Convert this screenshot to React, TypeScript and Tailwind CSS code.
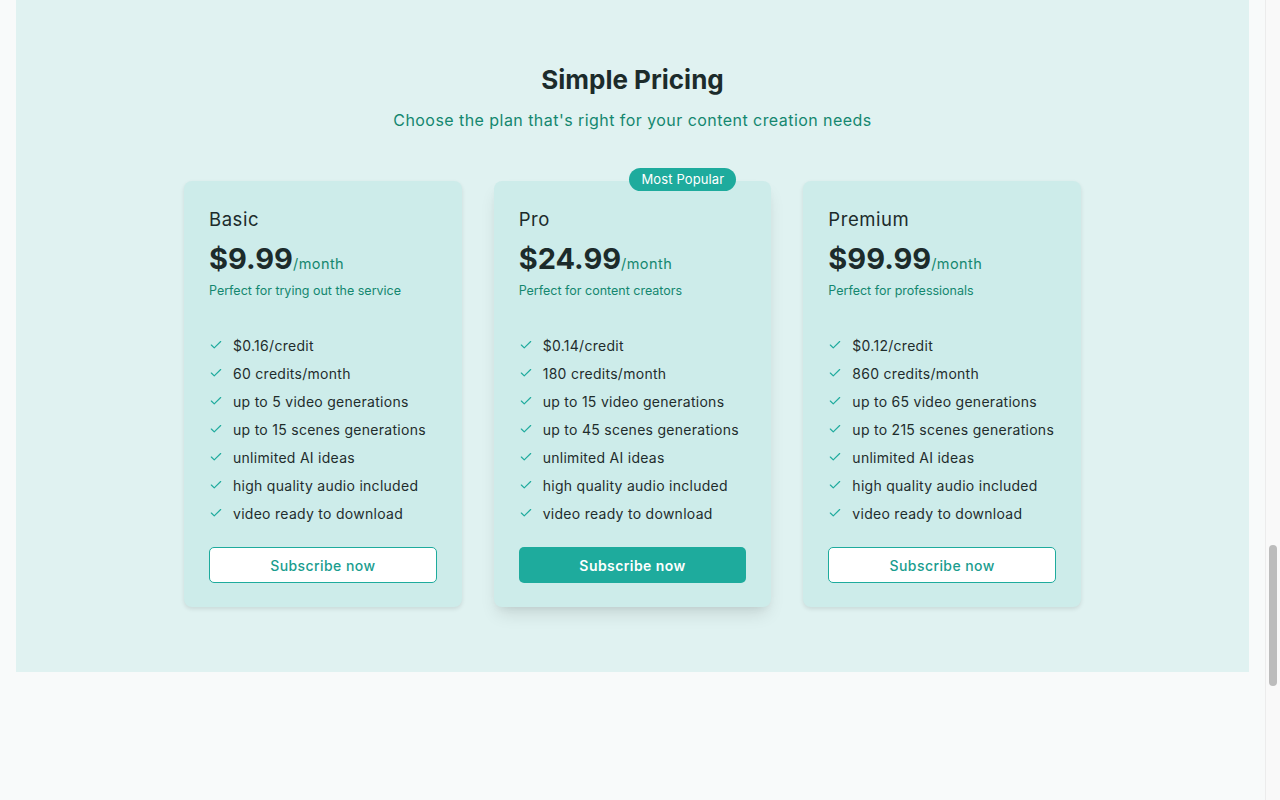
import { Check } from "lucide-react";

const plans = [
    {
        name: "Basic",
        price: "$9.99",
        blurb: "Perfect for trying out the service",
        features: [
            "$0.16/credit",
            "60 credits/month",
            "up to 5 video generations",
            "up to 15 scenes generations",
            "unlimited AI ideas",
            "high quality audio included",
            "video ready to download",
        ],
    },
    {
        name: "Pro",
        price: "$24.99",
        blurb: "Perfect for content creators",
        popular: true,
        features: [
            "$0.14/credit",
            "180 credits/month",
            "up to 15 video generations",
            "up to 45 scenes generations",
            "unlimited AI ideas",
            "high quality audio included",
            "video ready to download",
        ],
    },
    {
        name: "Premium",
        price: "$99.99",
        blurb: "Perfect for professionals",
        features: [
            "$0.12/credit",
            "860 credits/month",
            "up to 65 video generations",
            "up to 215 scenes generations",
            "unlimited AI ideas",
            "high quality audio included",
            "video ready to download",
        ],
    },
];

type Plan = (typeof plans)[number] & { popular?: boolean };

function PlanCard({ plan }: { plan: Plan }) {
    return (
        <div className={`relative bg-[#cdeceA] rounded-lg px-[25px] pt-6 pb-6 flex flex-col ${plan.popular ? "shadow-[0_10px_18px_-4px_rgba(0,0,0,0.12),0_4px_8px_-4px_rgba(0,0,0,0.08)]" : "shadow-[0_2px_4px_rgba(0,0,0,0.10)]"}`}>
            {plan.popular &&
                <span className="absolute -top-[13px] right-[35px] bg-[#1eab9d] text-white text-[13px] leading-[23px] px-3 rounded-full tracking-[0.01em]">
                    Most Popular
                </span>}
            <h3 className="text-[18.5px] leading-7 text-[#1c2b2b] tracking-[0.03em]">{plan.name}</h3>
            <div className="mt-[8px] flex items-baseline">
                <span className="text-[29px] leading-9 font-bold text-[#1c2b2b]">{plan.price}</span>
                <span className="text-[14.5px] text-[#14876f] tracking-[0.03em]">/month</span>
            </div>
            <p className="mt-[4px] text-[12.5px] leading-5 text-[#14876f]">{plan.blurb}</p>
            <ul className="mt-[30px] flex flex-col">
                {plan.features.map(f => (
                    <li key={f} className="flex items-center gap-[10px] h-7 text-[14px] text-[#1f2d2d] tracking-[0.02em]">
                        <Check className="size-[14px] text-[#1eab9d]" strokeWidth={2} />
                        <span>{f}</span>
                    </li>
                ))}
            </ul>
            <button className={`mt-[20px] h-[36px] rounded-[5px] text-[14px] font-medium tracking-[0.03em] ${plan.popular ? "bg-[#1eab9d] text-white font-semibold" : "bg-white border border-[#1eab9d] text-[#1a9d8f]"}`}>
                Subscribe now
            </button>
        </div>
    );
}

export default function App() {
    return (
        <div className="flex h-[800px] bg-[#f8fafa] overflow-hidden" style={{ fontFamily: "Inter, 'Noto Sans', sans-serif" }}>
            <div className="flex-1 px-4">
                <section className="h-[672px] bg-[#e0f2f1] pt-[62px] flex flex-col items-center">
                    <h2 className="text-[26px] leading-9 font-bold text-[#1c2b2b]">Simple Pricing</h2>
                    <p className="mt-[10px] text-[16px] leading-6 text-[#14876f] tracking-[0.028em]">Choose the plan that's right for your content creation needs</p>
                    <div className="mt-[49px] w-[897px] grid grid-cols-3 gap-[32px]">
                        {plans.map(p => <PlanCard key={p.name} plan={p} />)}
                    </div>
                </section>
            </div>
            <div className="w-[15px] bg-[#f9f9f9] border-l border-[#ececec] flex flex-col">
                <div className="h-[545px]" />
                <div className="mx-auto w-[8px] h-[141px] rounded-full bg-[#bcbcbc]" />
            </div>
        </div>
    );
}
